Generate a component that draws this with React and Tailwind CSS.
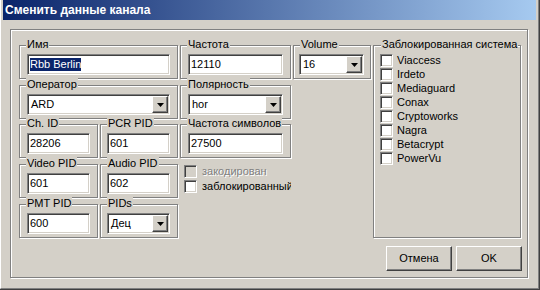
import React from "react";

const sunken =
  "border border-t-[#808080] border-l-[#808080] border-b-white border-r-white shadow-[inset_1px_1px_0_#404040,inset_-1px_-1px_0_#d4d0c8]";
const raised =
  "border border-t-white border-l-white border-b-[#404040] border-r-[#404040] shadow-[inset_-1px_-1px_0_#808080,inset_1px_1px_0_#d4d0c8]";
const etched =
  "border border-[#808080] shadow-[inset_1px_1px_0_#fff,1px_1px_0_#fff]";

function Group({ label, w, h = "h-[34px]", labelLeft = "left-[6px]", children, pad = "px-[7px] pt-[8px]" }) {
  return (
    <div className={`relative ${etched} ${w} ${h} ${pad} shrink-0`}>
      <span className={`absolute ${labelLeft} top-[-8px] px-[1px] bg-[#d4d0c8] text-[11px] leading-[13px] whitespace-nowrap`}>
        {label}
      </span>
      {children}
    </div>
  );
}

function Input({ children }) {
  return (
    <div className={`${sunken} h-[21px] w-full bg-white flex items-center pl-[2px] text-[11px] leading-[13px] overflow-hidden whitespace-nowrap`}>
      {children}
    </div>
  );
}

function Arrow() {
  return (
    <svg width="7" height="4" viewBox="0 0 7 4">
      <polygon points="0,0 7,0 3.5,4" fill="#000" />
    </svg>
  );
}

function Select({ value }) {
  return (
    <div className={`${sunken} h-[21px] w-full bg-white flex items-stretch p-[1px]`}>
      <div className="flex-1 flex items-center pl-[2px] text-[11px] leading-[13px] whitespace-nowrap overflow-hidden">
        {value}
      </div>
      <div className={`${raised} w-[16px] bg-[#d4d0c8] flex items-center justify-center`}>
        <Arrow />
      </div>
    </div>
  );
}

function Check({ disabled }) {
  return (
    <div className={`${sunken} w-[13px] h-[13px] shrink-0 ${disabled ? "bg-[#d4d0c8]" : "bg-white"}`} />
  );
}

export default function App() {
  const systems = ["Viaccess", "Irdeto", "Mediaguard", "Conax", "Cryptoworks", "Nagra", "Betacrypt", "PowerVu"];
  return (
    <div className="w-[540px] h-[290px] bg-[#d4d0c8] border-r border-b border-[#404040] flex font-['Liberation_Sans',Arial,sans-serif] text-black">
      <div className="flex-1 flex flex-col border-l border-l-white border-r border-r-[#808080] border-b border-b-[#808080] px-[2px] pb-[2px]">
        <div className="h-[20px] bg-[linear-gradient(to_right,#0a246a,#a6caf0)] flex items-center pl-[2px] text-white font-bold text-[12px] leading-[14px] shrink-0">
          Сменить данные канала
        </div>
        <div className={`${etched} w-[518px] h-[249px] ml-[7px] mt-[9px] flex flex-col`}>
          <div className="flex gap-[2px] pl-[8px] pt-[15px]">
            <div className="flex flex-col w-[352px]">
              <div className="flex gap-[2px]">
                <Group label="Имя" w="w-[159px]">
                  <Input>
                    <span className="bg-[#0a246a] text-white leading-[13px]">Rbb Berlin</span>
                  </Input>
                </Group>
                <Group label="Частота" w="w-[111px]">
                  <Input>12110</Input>
                </Group>
                <Group label="Volume" w="w-[78px]" pad="pl-[5px] pr-[6px] pt-[8px]">
                  <Select value="16" />
                </Group>
              </div>
              <div className="flex gap-[2px] mt-[6px]">
                <Group label="Оператор" w="w-[159px]">
                  <Select value="ARD" />
                </Group>
                <Group label="Полярность" w="w-[111px]">
                  <Select value="hor" />
                </Group>
              </div>
              <div className="flex gap-[2px] mt-[5px]">
                <Group label="Ch. ID" w="w-[79px]">
                  <Input>28206</Input>
                </Group>
                <Group label="PCR PID" w="w-[78px]" pad="pl-[6px] pr-[7px] pt-[8px]">
                  <Input>601</Input>
                </Group>
                <Group label="Частота символов" w="w-[111px]">
                  <Input>27500</Input>
                </Group>
              </div>
              <div className="flex gap-[2px] mt-[6px]">
                <Group label="Video PID" w="w-[79px]">
                  <Input>601</Input>
                </Group>
                <Group label="Audio PID" w="w-[78px]" pad="pl-[6px] pr-[7px] pt-[8px]">
                  <Input>602</Input>
                </Group>
                <div className="w-[111px] flex flex-col gap-[2px] pl-[4px] pt-[1px]">
                  <div className="flex items-center gap-[5px] h-[13px]">
                    <Check disabled />
                    <span className="text-[11px] leading-[13px] text-[#808080] [text-shadow:1px_1px_0_#fff] whitespace-nowrap">
                      закодирован
                    </span>
                  </div>
                  <div className="flex items-center gap-[5px] h-[13px]">
                    <Check />
                    <span className="text-[11px] leading-[13px] whitespace-nowrap overflow-hidden w-[89px]">
                      заблокированный
                    </span>
                  </div>
                </div>
              </div>
              <div className="flex gap-[2px] mt-[6px]">
                <Group label="PMT PID" w="w-[79px]">
                  <Input>600</Input>
                </Group>
                <Group label="PIDs" w="w-[78px]" pad="pl-[6px] pr-[7px] pt-[8px]">
                  <Select value="Дец" />
                </Group>
              </div>
            </div>
            <Group label="Заблокированная система" w="w-[148px]" h="h-[193px]" labelLeft="left-[7px]" pad="pl-[6px] pt-[8px]">
              <div className="flex flex-col gap-[1px]">
                {systems.map((s) => (
                  <div key={s} className="flex items-center gap-[4px] h-[13px]">
                    <Check />
                    <span className="text-[11px] leading-[13px] whitespace-nowrap">{s}</span>
                  </div>
                ))}
              </div>
            </Group>
          </div>
          <div className="flex justify-end gap-[4px] pr-[5px] mt-[8px]">
            <div className={`${raised} w-[66px] h-[25px] bg-[#d4d0c8] flex items-center justify-center text-[11px]`}>
              Отмена
            </div>
            <div className={`${raised} w-[66px] h-[25px] bg-[#d4d0c8] flex items-center justify-center text-[11px]`}>
              OK
            </div>
          </div>
        </div>
      </div>
    </div>
  );
}
